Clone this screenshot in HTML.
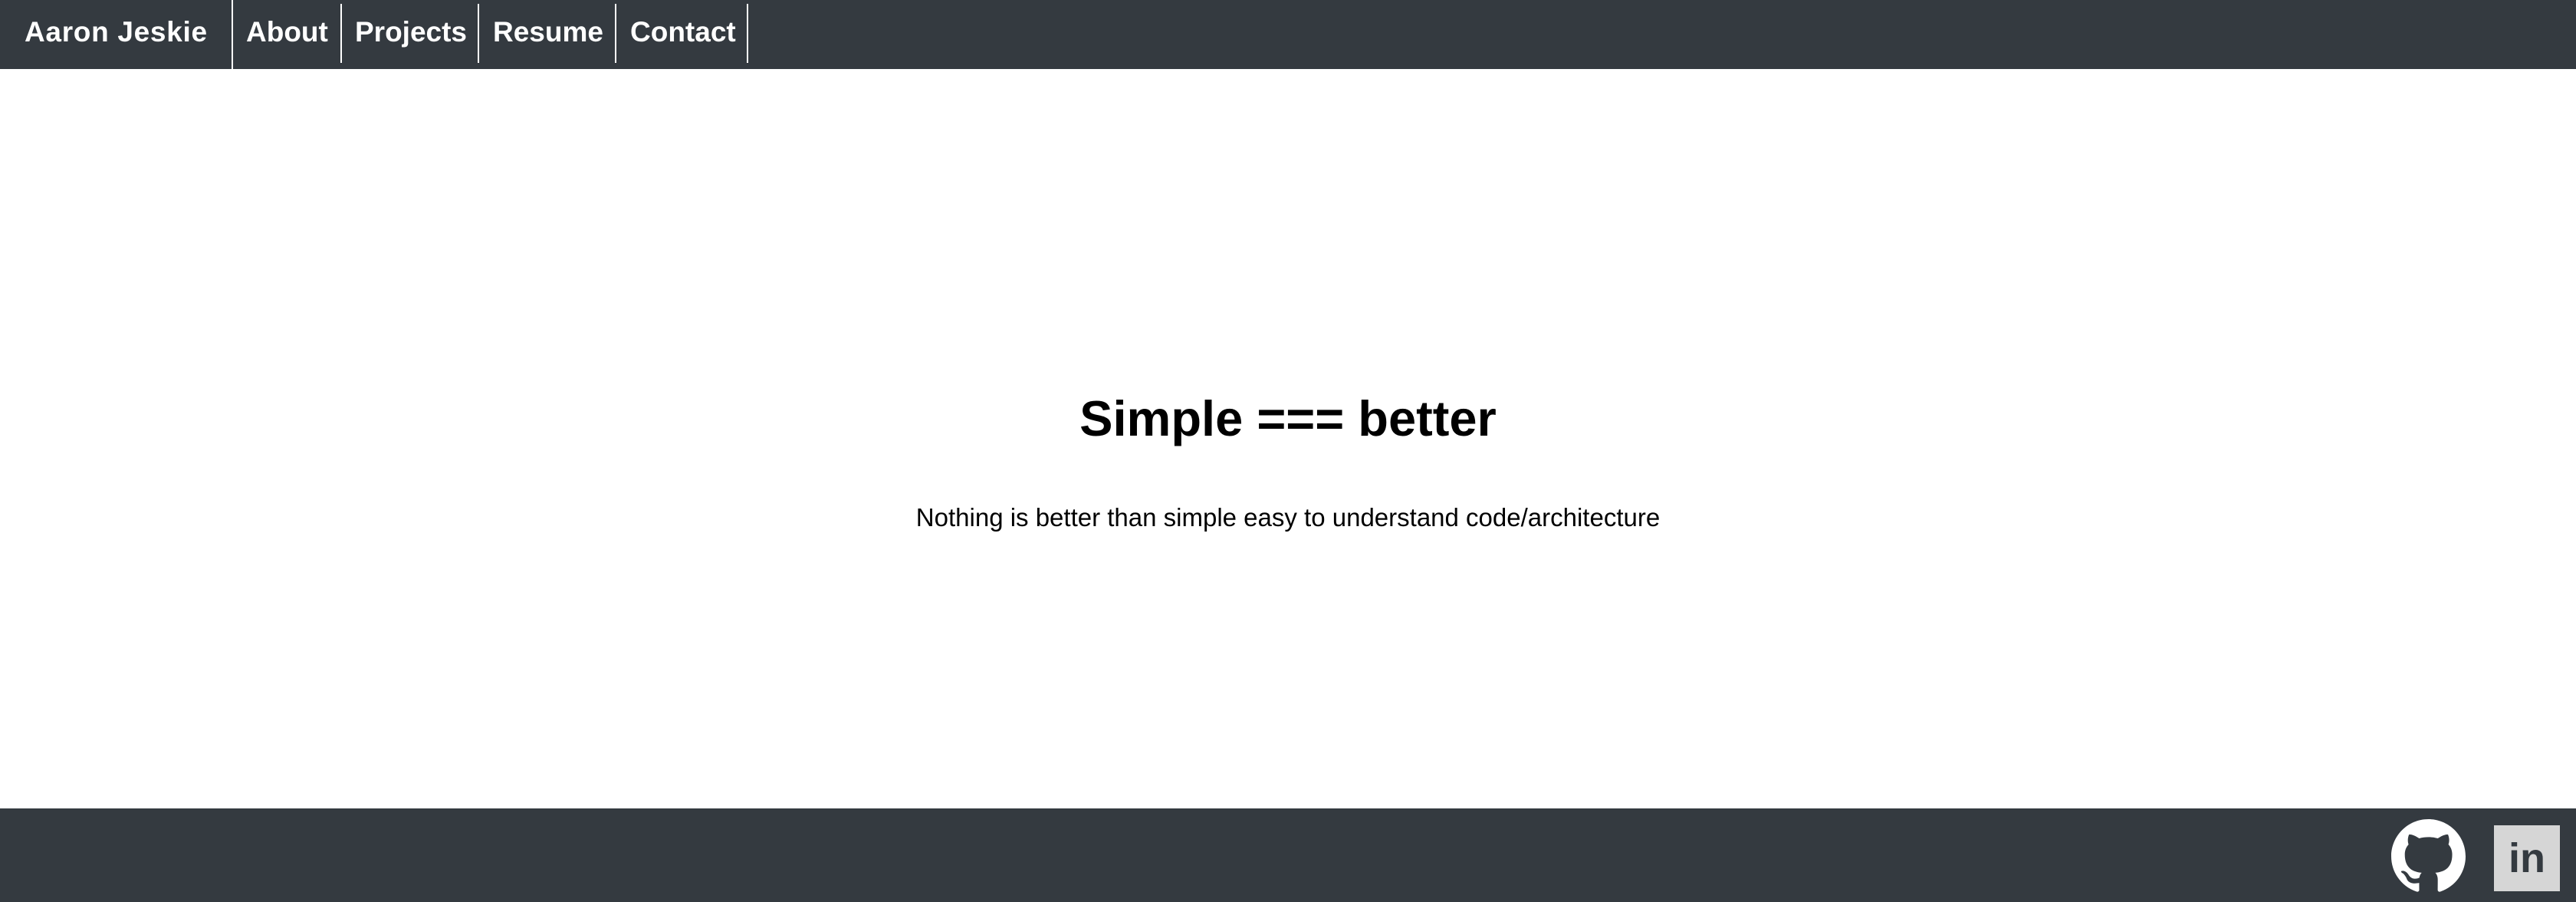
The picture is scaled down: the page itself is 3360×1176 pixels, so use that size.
<!DOCTYPE html>
<html><head><style>
*{margin:0;padding:0;box-sizing:border-box}
body{width:3360px;height:1176px;background:#fff;font-family:"Liberation Sans",sans-serif;position:relative;overflow:hidden}
nav{position:absolute;left:0;top:0;width:3360px;height:90px;background:#343a40}
.t{position:absolute;color:#fff;font-weight:bold;font-size:37px;top:20px;line-height:44px}
.s{position:absolute;background:#fff;width:2px}
h1{position:absolute;left:0;width:3360px;text-align:center;top:506px;font-size:65px;line-height:80px;font-weight:bold;color:#000}
p{position:absolute;left:0;width:3360px;text-align:center;top:655px;font-size:33px;line-height:40px;color:#000}
footer{position:absolute;left:0;top:1054px;width:3360px;height:122px;background:#343a40}
</style></head><body>
<nav>
<div class="t" style="left:32px;letter-spacing:0.7px">Aaron Jeskie</div>
<div class="s" style="left:302px;top:0;height:90px"></div>
<div class="t" style="left:321px">About</div>
<div class="s" style="left:444px;top:5px;height:77px"></div>
<div class="t" style="left:463px">Projects</div>
<div class="s" style="left:623px;top:5px;height:77px"></div>
<div class="t" style="left:643px">Resume</div>
<div class="s" style="left:802px;top:5px;height:77px"></div>
<div class="t" style="left:822px">Contact</div>
<div class="s" style="left:974px;top:5px;height:77px"></div>
</nav>
<h1>Simple === better</h1>
<p>Nothing is better than simple easy to understand code/architecture</p>
<footer>
<svg style="position:absolute;left:3119px;top:14px" width="97" height="97" viewBox="0 0 16 16"><path fill="#fff" d="M8 0C3.58 0 0 3.58 0 8c0 3.54 2.29 6.530 5.47 7.59.4.07.55-.17.55-.38 0-.19-.01-.82-.01-1.49-2.010.37-2.530-.49-2.690-.94-.09-.23-.48-.94-.82-1.13-.28-.15-.68-.52-.01-.53.63-.01 1.08.58 1.23.82.72 1.21 1.870.87 2.330.66.07-.52.28-.87.51-1.07-1.78-.2-3.64-.89-3.64-3.95 0-.87.31-1.59.82-2.15-.08-.2-.36-1.02.08-2.12 0 0 .67-.21 2.2.82.64-.18 1.32-.27 2-.27.68 0 1.36.09 2 .27 1.53-1.04 2.2-.82 2.2-.82.44 1.1.16 1.92.08 2.12.51.56.82 1.27.82 2.15 0 3.07-1.87 3.75-3.65 3.95.29.25.54.73.54 1.48 0 1.07-.01 1.93-.01 2.2 0 .21.15.46.55.38A8.013 8.013 0 0016 8c0-4.42-3.58-8-8-8z"/></svg>
<div style="position:absolute;left:3253px;top:22px;width:86px;height:86px;background:#d6d6d6;color:#343a40;font-weight:bold;font-size:54px;line-height:86px;text-align:center">in</div>
</footer>
</body></html>
